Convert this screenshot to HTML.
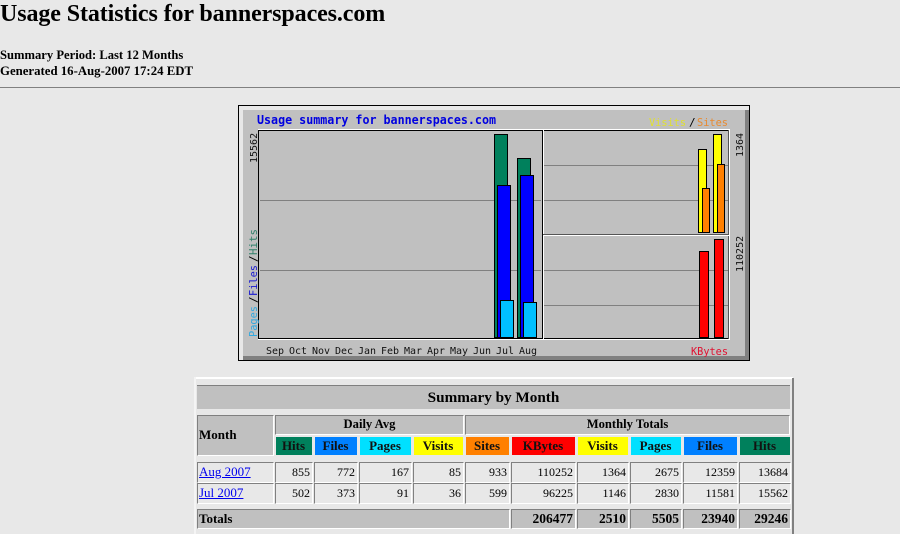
<!DOCTYPE html>
<html><head><meta charset="utf-8"><title>Usage Statistics for bannerspaces.com</title>
<style>
html,body{margin:0;padding:0;background:#e8e8e8;width:900px;height:534px;overflow:hidden}
body{position:relative;font-family:"Liberation Serif",serif;color:#000}
.a{position:absolute;white-space:nowrap}
.c{position:absolute;box-sizing:border-box;white-space:nowrap;font:12px/1 "Liberation Serif",serif;display:flex;align-items:center;padding:0 2px 2px 1px}
.i{border-top:1px solid #808080;border-left:1px solid #808080;border-right:1px solid #fff;border-bottom:1px solid #fff}
.g{background:#c0c0c0}
.b{font-weight:bold}
.m{justify-content:center}
.r{justify-content:flex-end}
.h{font-weight:bold;font-size:13px;justify-content:center;border:1px solid #e8e8e8;color:#111}
a{color:#0000ee;text-decoration:underline}
svg{position:absolute;left:0;top:0}
svg text{font-family:"DejaVu Sans Mono",monospace}
</style></head><body>
<div class="a b" style="left:0;top:0;font-size:24px;line-height:28px;letter-spacing:-.1px">Usage Statistics for bannerspaces.com</div>
<div class="a b" style="left:0;top:48px;font-size:12.6px;line-height:14px">Summary Period: Last 12 Months</div>
<div class="a b" style="left:0;top:64px;font-size:12.8px;line-height:14px">Generated 16-Aug-2007 17:24 EDT</div>
<div class="a" style="left:0;top:87px;width:900px;height:1px;background:#808080"></div>

<svg width="900" height="370" shape-rendering="crispEdges">
<rect x="238" y="105" width="512" height="256" fill="#000"/>
<rect x="239" y="106" width="510" height="254" fill="#e8e8e8"/>
<rect x="243" y="110" width="506" height="250" fill="#808080"/>
<rect x="243" y="110" width="502" height="246" fill="#c0c0c0"/>
<rect x="258" y="129" width="472" height="1" fill="#fff"/>
<rect x="258" y="130" width="471" height="1" fill="#000"/>
<rect x="258" y="130" width="1" height="209" fill="#000"/>
<rect x="258" y="339" width="472" height="1" fill="#fff"/>
<rect x="259" y="338" width="470" height="1" fill="#000"/>
<rect x="542" y="130" width="1" height="209" fill="#000"/>
<rect x="543" y="130" width="1" height="209" fill="#fff"/>
<rect x="728" y="130" width="1" height="209" fill="#555"/>
<rect x="729" y="129" width="1" height="211" fill="#fff"/>
<rect x="543" y="234" width="186" height="1" fill="#555"/>
<rect x="543" y="235" width="186" height="1" fill="#fff"/>
<g fill="#808080">
<rect x="260" y="200" width="281" height="1"/><rect x="260" y="270" width="281" height="1"/>
<rect x="544" y="165" width="184" height="1"/><rect x="544" y="200" width="184" height="1"/>
<rect x="544" y="270" width="184" height="1"/><rect x="544" y="305" width="184" height="1"/>
</g>
<g stroke="#000" stroke-width="1">
<rect x="494.5" y="134.5" width="13" height="203" fill="#00805c"/>
<rect x="517.5" y="158.5" width="13" height="179" fill="#00805c"/>
<rect x="497.5" y="185.5" width="13" height="152" fill="#0000ff"/>
<rect x="520.5" y="175.5" width="13" height="162" fill="#0000ff"/>
<rect x="500.5" y="300.5" width="13" height="37" fill="#00c0ff"/>
<rect x="523.5" y="302.5" width="13" height="35" fill="#00c0ff"/>
<rect x="698.5" y="149.5" width="8" height="83" fill="#ffff00"/>
<rect x="713.5" y="134.5" width="8" height="98" fill="#ffff00"/>
<rect x="702.5" y="188.5" width="7" height="44" fill="#ff8000"/>
<rect x="717.5" y="164.5" width="7" height="68" fill="#ff8000"/>
<rect x="699.5" y="251.5" width="9" height="86" fill="#ff0000"/>
<rect x="714.5" y="239.5" width="9" height="98" fill="#ff0000"/>
</g>
<g shape-rendering="auto">
<text x="257" y="124" font-size="12" font-weight="bold" fill="#0000e0" textLength="239" lengthAdjust="spacingAndGlyphs">Usage summary for bannerspaces.com</text>
<text x="649" y="126" font-size="11" fill="#e0e030" textLength="37" lengthAdjust="spacingAndGlyphs">Visits</text>
<text x="689" y="126" font-size="11" fill="#000">/</text>
<text x="697" y="126" font-size="11" fill="#e88a30" textLength="31" lengthAdjust="spacingAndGlyphs">Sites</text>
<text x="691" y="355" font-size="11" fill="#e01030" textLength="37" lengthAdjust="spacingAndGlyphs">KBytes</text>
<g font-size="10" fill="#111">
<text x="266" y="354">Sep</text><text x="289" y="354">Oct</text><text x="312" y="354">Nov</text><text x="335" y="354">Dec</text><text x="358" y="354">Jan</text><text x="381" y="354">Feb</text><text x="404" y="354">Mar</text><text x="427" y="354">Apr</text><text x="450" y="354">May</text><text x="473" y="354">Jun</text><text x="496" y="354">Jul</text><text x="519" y="354">Aug</text>
<text transform="translate(257,163) rotate(-90)">15562</text>
<text transform="translate(743,157) rotate(-90)">1364</text>
<text transform="translate(743,272) rotate(-90)">110252</text>
</g>
<g font-size="11">
<text transform="translate(257,337) rotate(-90)" fill="#30a8e0" textLength="31" lengthAdjust="spacingAndGlyphs">Pages</text>
<text transform="translate(257,303) rotate(-90)" fill="#000">/</text>
<text transform="translate(257,296) rotate(-90)" fill="#1818d0" textLength="31" lengthAdjust="spacingAndGlyphs">Files</text>
<text transform="translate(257,262) rotate(-90)" fill="#000">/</text>
<text transform="translate(257,255) rotate(-90)" fill="#30806a" textLength="26" lengthAdjust="spacingAndGlyphs">Hits</text>
</g>
</g>
</svg>

<!-- table frame -->
<div class="a" style="left:194px;top:377px;width:599px;height:2px;background:#fff"></div>
<div class="a" style="left:194px;top:377px;width:2px;height:157px;background:#f4f4f4"></div>
<div class="a" style="left:792px;top:378px;width:2px;height:156px;background:#808080"></div>

<div class="c g b m" style="left:197px;top:385px;width:593px;height:24px;font-size:15.2px;border-top:1px solid #808080;padding:0">Summary by Month</div>
<div class="c g b i" style="left:197px;top:415px;width:77px;height:41px;font-size:13px">Month</div>
<div class="c g b i m" style="left:275px;top:415px;width:189px;height:20px;font-size:12.6px;padding:0 0 1px">Daily Avg</div>
<div class="c g b i m" style="left:465px;top:415px;width:325px;height:20px;font-size:12.6px;padding:0 0 1px">Monthly Totals</div>

<div class="c h" style="left:275px;top:436px;width:38px;height:20px;background:#00805c">Hits</div>
<div class="c h" style="left:314px;top:436px;width:44px;height:20px;background:#0080ff">Files</div>
<div class="c h" style="left:359px;top:436px;width:53px;height:20px;background:#00e0ff">Pages</div>
<div class="c h" style="left:413px;top:436px;width:51px;height:20px;background:#ffff00">Visits</div>
<div class="c h" style="left:465px;top:436px;width:45px;height:20px;background:#ff8000">Sites</div>
<div class="c h" style="left:511px;top:436px;width:65px;height:20px;background:#ff0000">KBytes</div>
<div class="c h" style="left:577px;top:436px;width:52px;height:20px;background:#ffff00">Visits</div>
<div class="c h" style="left:630px;top:436px;width:52px;height:20px;background:#00e0ff">Pages</div>
<div class="c h" style="left:683px;top:436px;width:55px;height:20px;background:#0080ff">Files</div>
<div class="c h" style="left:739px;top:436px;width:52px;height:20px;background:#00805c">Hits</div>

<div class="c i" style="left:197px;top:462px;width:77px;height:21px;font-size:13px"><a>Aug 2007</a></div>
<div class="c i r" style="left:275px;top:462px;width:38px;height:21px">855</div>
<div class="c i r" style="left:314px;top:462px;width:44px;height:21px">772</div>
<div class="c i r" style="left:359px;top:462px;width:53px;height:21px">167</div>
<div class="c i r" style="left:413px;top:462px;width:51px;height:21px">85</div>
<div class="c i r" style="left:465px;top:462px;width:45px;height:21px">933</div>
<div class="c i r" style="left:511px;top:462px;width:65px;height:21px">110252</div>
<div class="c i r" style="left:577px;top:462px;width:52px;height:21px">1364</div>
<div class="c i r" style="left:630px;top:462px;width:52px;height:21px">2675</div>
<div class="c i r" style="left:683px;top:462px;width:55px;height:21px">12359</div>
<div class="c i r" style="left:739px;top:462px;width:52px;height:21px">13684</div>

<div class="c i" style="left:197px;top:483px;width:77px;height:21px;font-size:13px"><a>Jul 2007</a></div>
<div class="c i r" style="left:275px;top:483px;width:38px;height:21px">502</div>
<div class="c i r" style="left:314px;top:483px;width:44px;height:21px">373</div>
<div class="c i r" style="left:359px;top:483px;width:53px;height:21px">91</div>
<div class="c i r" style="left:413px;top:483px;width:51px;height:21px">36</div>
<div class="c i r" style="left:465px;top:483px;width:45px;height:21px">599</div>
<div class="c i r" style="left:511px;top:483px;width:65px;height:21px">96225</div>
<div class="c i r" style="left:577px;top:483px;width:52px;height:21px">1146</div>
<div class="c i r" style="left:630px;top:483px;width:52px;height:21px">2830</div>
<div class="c i r" style="left:683px;top:483px;width:55px;height:21px">11581</div>
<div class="c i r" style="left:739px;top:483px;width:52px;height:21px">15562</div>

<div class="c g b i" style="left:197px;top:509px;width:313px;height:20px;font-size:13px;padding-bottom:1px">Totals</div>
<div class="c g b i r" style="left:511px;top:509px;width:65px;height:20px;font-size:13.5px;padding-bottom:1px">206477</div>
<div class="c g b i r" style="left:577px;top:509px;width:52px;height:20px;font-size:13.5px;padding-bottom:1px">2510</div>
<div class="c g b i r" style="left:630px;top:509px;width:52px;height:20px;font-size:13.5px;padding-bottom:1px">5505</div>
<div class="c g b i r" style="left:683px;top:509px;width:55px;height:20px;font-size:13.5px;padding-bottom:1px">23940</div>
<div class="c g b i r" style="left:739px;top:509px;width:52px;height:20px;font-size:13.5px;padding-bottom:1px">29246</div>
</body></html>
